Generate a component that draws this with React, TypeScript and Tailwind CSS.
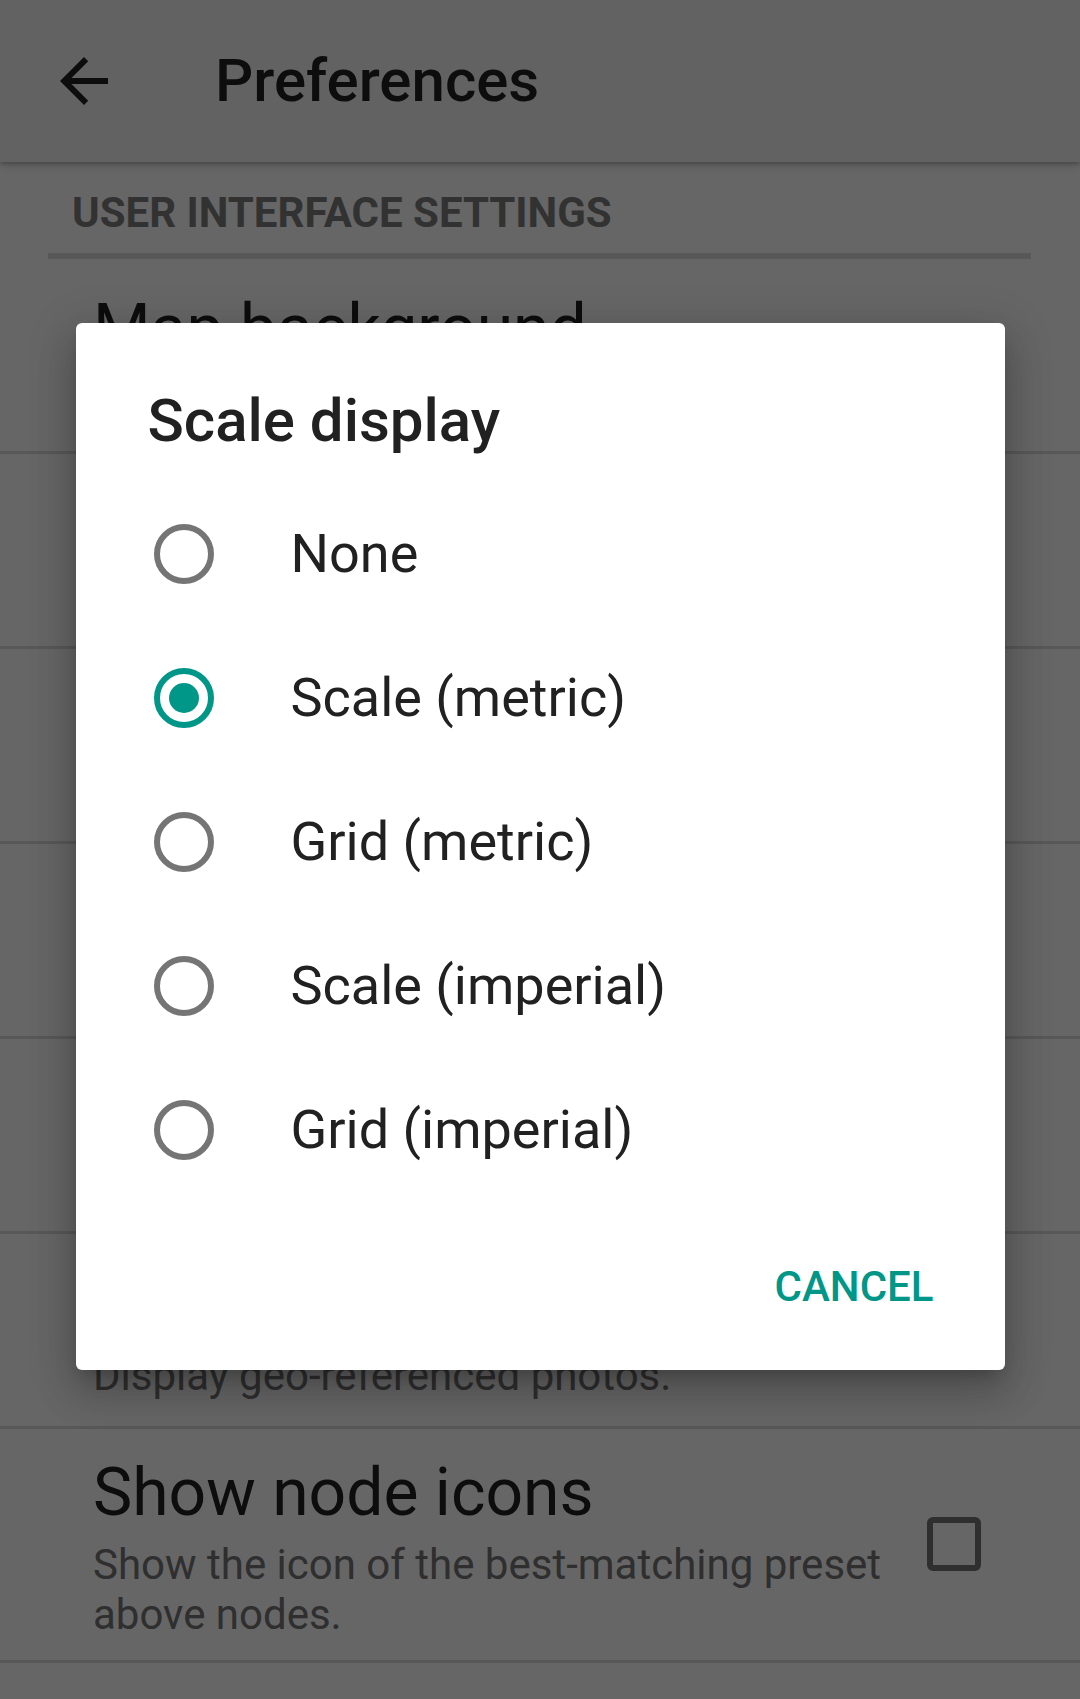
import React from "react";

type Pref = {
  title: string;
  summary: string;
  checkbox?: boolean;
};

const prefs: Pref[] = [
  { title: "Map background", summary: "OpenStreetMap (Standard)" },
  { title: "Map overlay", summary: "None" },
  { title: "Map style", summary: "Color round nodes" },
  { title: "Scale display", summary: "Scale (metric)" },
  { title: "Full screen mode", summary: "Automatic" },
  { title: "Show photo layer", summary: "Display geo-referenced photos.", checkbox: true },
  {
    title: "Show node icons",
    summary: "Show the icon of the best-matching preset above nodes.",
    checkbox: true,
  },
];

const options = ["None", "Scale (metric)", "Grid (metric)", "Scale (imperial)", "Grid (imperial)"];

function Radio({ checked }: { checked: boolean }) {
  return (
    <div
      className={
        checked
          ? "flex h-[60px] w-[60px] shrink-0 items-center justify-center rounded-full border-[6px] border-[#009688]"
          : "flex h-[60px] w-[60px] shrink-0 items-center justify-center rounded-full border-[6px] border-[#757575]"
      }
    >
      {checked && <div className="h-[30px] w-[30px] rounded-full bg-[#009688]" />}
    </div>
  );
}

function PrefRow({ p }: { p: Pref }) {
  return (
    <>
      <div className="flex min-h-[192px] items-center pb-[20px] pl-[93px] pr-[99px] pt-[25px]">
        <div className="min-w-0 flex-1">
          <div className="text-[66px] leading-[77px] text-[#212121]">{p.title}</div>
          <div className="mt-[9px] text-[42px] leading-[50px] text-[#757575]">{p.summary}</div>
        </div>
        {p.checkbox && (
          <div className="mb-[6px] ml-[22px] h-[54px] w-[54px] shrink-0 rounded-[6px] border-[6px] border-[#757575]" />
        )}
      </div>
      <div className="h-[3px] bg-[#dcdcdc]" />
    </>
  );
}

export default function App() {
  return (
    <div className="relative h-[1699px] w-[1080px] overflow-hidden bg-white font-[Roboto,sans-serif]">
      {/* toolbar */}
      <div className="relative z-10 flex h-[162px] items-center bg-[#f5f5f5] shadow-[0_2px_4px_rgba(0,0,0,0.22),0_4px_10px_rgba(0,0,0,0.12)]">
        <svg viewBox="0 0 24 24" className="ml-[48px] h-[72px] w-[72px]" fill="#212121">
          <path d="M20 11H7.83l5.59-5.59L12 4l-8 8 8 8 1.41-1.41L7.83 13H20v-2z" />
        </svg>
        <div className="ml-[95px] text-[60px] font-medium leading-[70px] text-[#212121]">Preferences</div>
      </div>

      {/* list */}
      <div className="pl-[72px] pt-[26px] text-[42px] font-bold leading-[49px] text-[#7e7e7e]">
        USER INTERFACE SETTINGS
      </div>
      <div className="ml-[48px] mr-[49px] mt-[16px] h-[6px] bg-[#dcdcdc]" />
      {prefs.map((p) => (
        <PrefRow key={p.title} p={p} />
      ))}

      {/* dim + dialog */}
      <div className="absolute inset-0 z-20 bg-black/60">
        <div className="mx-auto mt-[323px] w-[929px] rounded-[6px] bg-white shadow-[0_24px_38px_3px_rgba(0,0,0,0.14),0_9px_46px_8px_rgba(0,0,0,0.12),0_11px_15px_-7px_rgba(0,0,0,0.2)]">
          <div className="pl-[72px] pt-[63px] text-[60px] font-medium leading-[70px] text-[#212121]">
            Scale display
          </div>
          <div className="mt-[26px]">
            {options.map((o, i) => (
              <div key={o} className="flex h-[144px] items-center pl-[78px]">
                <Radio checked={i === 1} />
                <span className="ml-[77px] text-[54px] leading-[64px] text-[#212121]">{o}</span>
              </div>
            ))}
          </div>
          <div className="flex justify-end pb-[29px] pr-[47px] pt-[31px]">
            <button className="h-[108px] px-[24px] text-[42px] font-medium leading-[50px] text-[#009688]">
              CANCEL
            </button>
          </div>
        </div>
      </div>
    </div>
  );
}
